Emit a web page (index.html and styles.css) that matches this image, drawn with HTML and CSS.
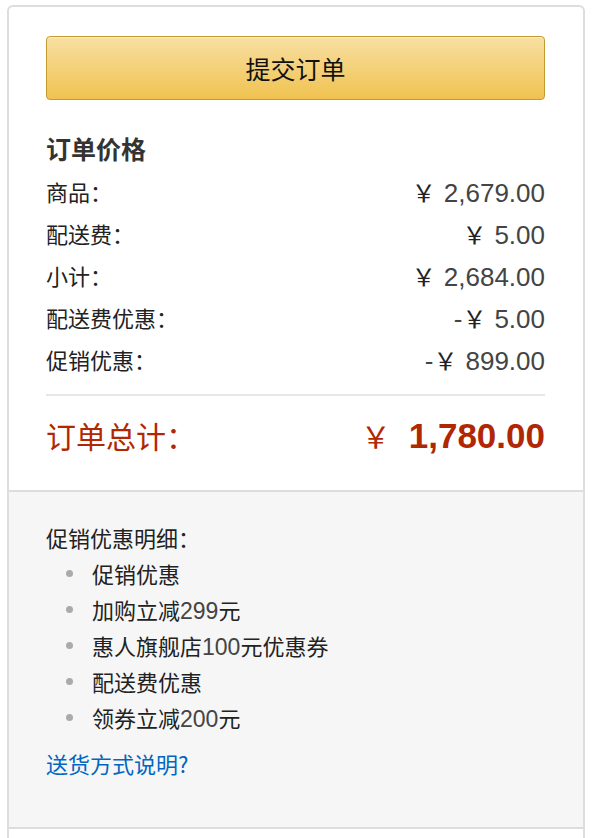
FILE: index.html
```html
<!DOCTYPE html>
<html>
<head>
	<meta charset="utf-8">
	<title>订单价格</title>
	<link rel="stylesheet" href="styles.css">
</head>
<body>

<div class="orderBox">

	<!-- order summary -->
	<div class="summary">
		<button class="placeOrder" type="button">提交订单</button>

		<h3 class="summaryTitle">订单价格</h3>

		<div class="priceRow">
			<span>商品：</span>
			<span class="amount"><span class="yen">￥</span>2,679.00</span>
		</div>
		<div class="priceRow">
			<span>配送费：</span>
			<span class="amount"><span class="yen">￥</span>5.00</span>
		</div>
		<div class="priceRow">
			<span>小计：</span>
			<span class="amount"><span class="yen">￥</span>2,684.00</span>
		</div>
		<div class="priceRow">
			<span>配送费优惠：</span>
			<span class="amount">-<span class="yen">￥</span>5.00</span>
		</div>
		<div class="priceRow">
			<span>促销优惠：</span>
			<span class="amount">-<span class="yen">￥</span>899.00</span>
		</div>

		<div class="totalRow">
			<span>订单总计：</span>
			<span class="totalAmount"><span class="yen">￥</span>1,780.00</span>
		</div>
	</div>

	<!-- promotion details -->
	<div class="promoDetails">
		<div class="promoTitle">促销优惠明细：</div>
		<ul class="promoList">
			<li>促销优惠</li>
			<li>加购立减<span class="num">299</span>元</li>
			<li>惠人旗舰店<span class="num">100</span>元优惠券</li>
			<li>配送费优惠</li>
			<li>领券立减<span class="num">200</span>元</li>
		</ul>
		<a class="shipLink" href="#">送货方式说明?</a>
	</div>

	<div class="boxFooter"></div>

</div>

</body>
</html>
```

FILE: styles.css
```css
body
{
	margin: 0;
	background: #fff;
	font-family: "Noto Sans CJK SC", "Liberation Sans", sans-serif;
	color: #333;
}

.orderBox
{
	margin: 5px 0 0 7px;
	width: 578px;
	box-sizing: border-box;
	border: 2px solid #ddd;
	border-radius: 6px;
	background: #fff;
}

.summary
{
	padding: 29px 38px 35px 37px;
	display: flex;
	flex-direction: column;
}

.placeOrder
{
	height: 64px;
	border: 1px solid #c59a32;
	border-radius: 4px;
	background: linear-gradient(to bottom, #f8e0a3, #f0c24f);
	box-shadow: inset 0 1px 0 #fbeec9;
	font-family: "Noto Sans CJK SC", sans-serif;
	font-size: 25px;
	color: #111;
	cursor: pointer;
	padding: 0;
}

.summaryTitle
{
	margin: 33px 0 7px 0;
	font-size: 25px;
	line-height: 30px;
	font-weight: bold;
	color: #333;
}

.priceRow
{
	display: flex;
	justify-content: space-between;
	align-items: center;
	height: 42px;
	font-size: 22px;
	color: #222;
}

.amount
{
	font-family: "Liberation Sans", sans-serif;
	font-size: 26px;
	color: #444;
}

.yen
{
	font-family: "Noto Sans CJK SC", sans-serif;
	font-size: 24px;
	color: #222;
	margin-right: 8px;
}

.totalRow
{
	display: flex;
	justify-content: space-between;
	align-items: center;
	height: 40px;
	margin-top: 14px;
	padding-top: 19px;
	border-top: 2px solid #e7e7e7;
	font-size: 30px;
	color: #b12704;
}

.totalAmount
{
	font-family: "Liberation Sans", sans-serif;
	font-size: 35px;
	font-weight: bold;
}

.totalAmount .yen
{
	color: #b12704;
	font-weight: normal;
	font-size: 30px;
	margin-right: 18px;
}

.promoDetails
{
	border-top: 2px solid #ddd;
	background: #f6f6f6;
	padding: 27px 38px 46px 37px;
	font-size: 22px;
	line-height: 36px;
	color: #222;
}

.promoTitle
{
	height: 36px;
}

.promoList
{
	margin: 0;
	padding: 0 0 0 46px;
	list-style: none;
}

.promoList li
{
	position: relative;
	height: 36px;
}

/* small gray dot in front of each line */
.promoList li::before
{
	content: "";
	position: absolute;
	left: -26px;
	top: 15px;
	width: 7px;
	height: 7px;
	border-radius: 50%;
	background: #aaa;
}

.num
{
	font-family: "Liberation Sans", sans-serif;
	font-size: 23px;
	color: #444;
}

.shipLink
{
	display: block;
	height: 36px;
	margin-top: 10px;
	color: #0066c0;
	text-decoration: none;
}

.boxFooter
{
	border-top: 2px solid #ddd;
	height: 30px;
}
```
